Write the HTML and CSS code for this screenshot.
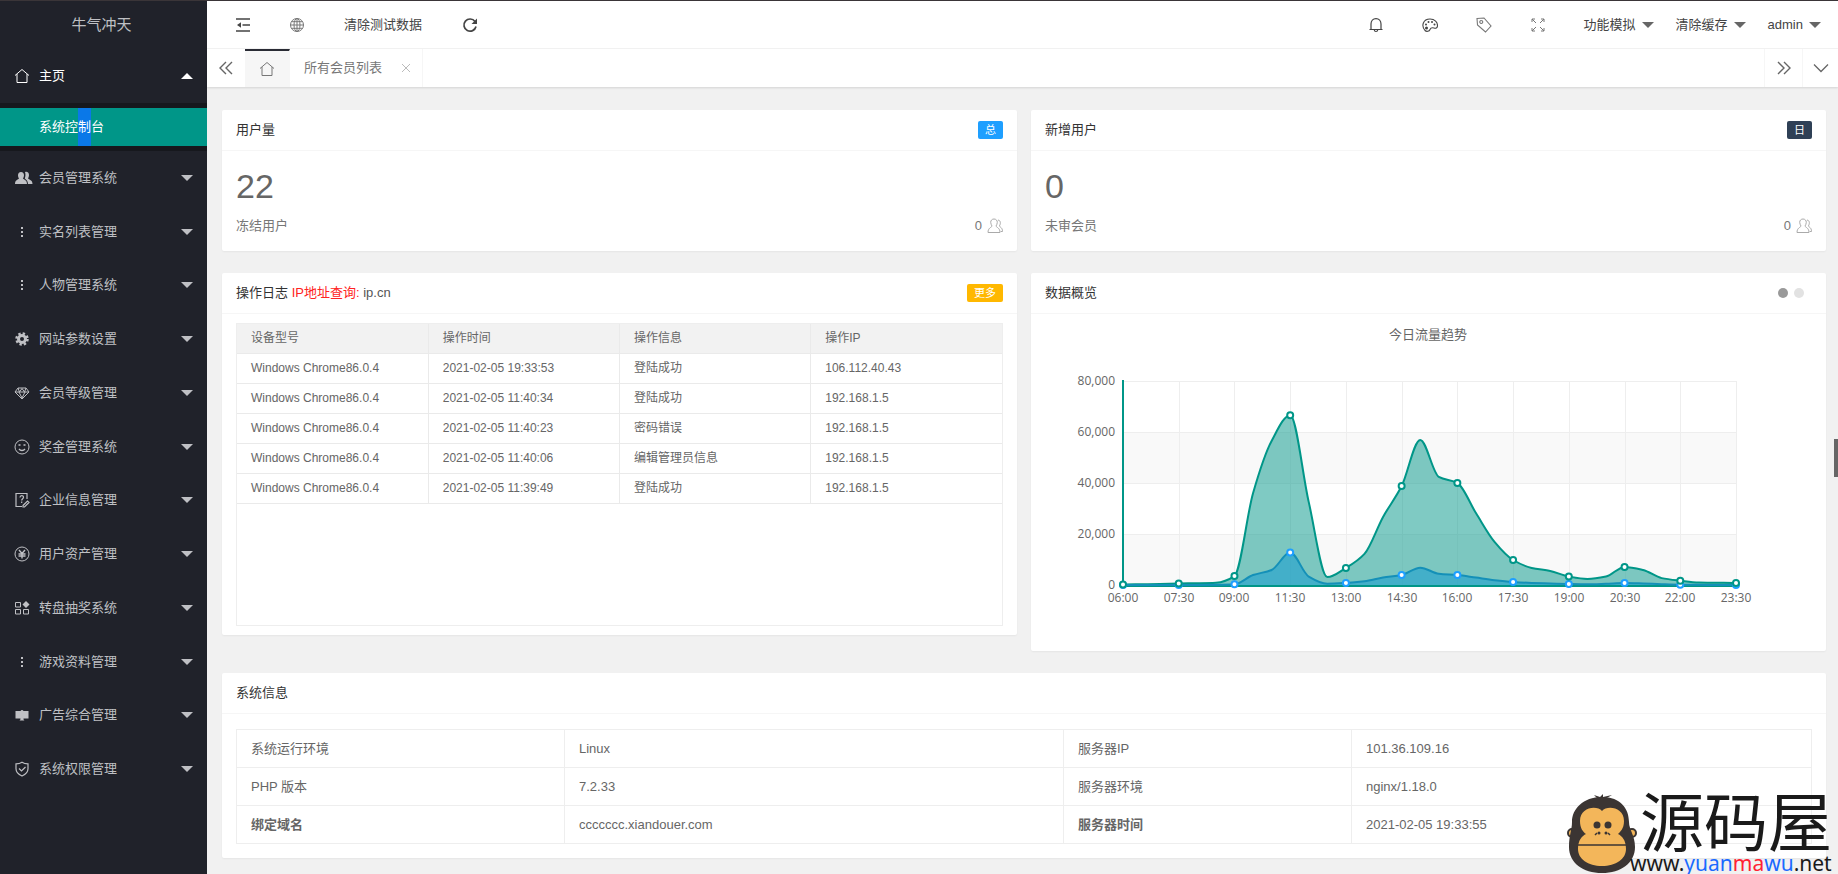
FILE: index.html
```html
<!DOCTYPE html>
<html lang="zh-CN">
<head>
<meta charset="utf-8">
<title>牛气冲天</title>
<link rel="stylesheet" href="styles.css">
</head>
<body>
<svg class="sprite" aria-hidden="true">
  <symbol id="i-home" viewBox="0 0 16 16"><path d="M1 7.500 8 1.500l7 6M3 6v8.500h10V6" fill="none" stroke="currentColor"/></symbol>
  <symbol id="i-users" viewBox="0 0 18 16"><path d="M6 2c2 0 3 1.500 3 3.200 0 1.600-.7 2.500-1 3.300 1 1.200 4 1.500 4 5.500H0c0-4 3-4.300 4-5.500-.4-.8-1-1.700-1-3.300C3 3.500 4 2 6 2zM10 2.300c.7-.8 4-.8 4 2.700 0 1.600-.6 2.600-.9 3.500.9 1.200 4.400 1.500 4.400 5.500H13c0-3-1.800-4.300-3.200-5.500C10.500 6.500 10.800 4 10 2.300z" fill="currentColor"/></symbol>
  <symbol id="i-dots" viewBox="0 0 16 16"><path d="M7 3h2v2H7zM7 7h2v2H7zM7 11h2v2H7z" fill="currentColor"/></symbol>
  <symbol id="i-gear" viewBox="0 0 16 16"><circle cx="8" cy="8" r="3.500" fill="none" stroke="currentColor" stroke-width="3"/><circle cx="8" cy="8" r="5.500" fill="none" stroke="currentColor" stroke-width="2.500" stroke-dasharray="2.300 2.020"/></symbol>
  <symbol id="i-gem" viewBox="0 0 16 16"><path d="M4 3h8l3 4-7 7-7-7zM1.500 7h13M5 7l3 6 3-6M4 3l1.500 4L8 3.500 10.500 7 12 3" fill="none" stroke="currentColor"/></symbol>
  <symbol id="i-smile" viewBox="0 0 16 16"><circle cx="8" cy="8" r="7" fill="none" stroke="currentColor"/><path d="M4.500 6h2M9.500 6h2M5 10c1.500 2 4.500 2 6 0" fill="none" stroke="currentColor" stroke-width="1.300"/></symbol>
  <symbol id="i-form" viewBox="0 0 16 16"><path d="M13 7V1.500H2v13h6M6 5.500c0-2.500 3.500-2.300 3.500-.3C9.500 6.800 7.700 6.600 7.700 8.500M7.700 9.500v1.500M9 13.500l4.500-4.500 1.500 1.500-4.500 4.500H9z" fill="none" stroke="currentColor" stroke-width="1.200"/></symbol>
  <symbol id="i-yen" viewBox="0 0 16 16"><circle cx="8" cy="8" r="7" fill="none" stroke="currentColor"/><path d="M5 4l3 3.500L11 4M8 7.500V12.500M4.500 8h7M4.500 10h7" fill="none" stroke="currentColor" stroke-width="1.400"/></symbol>
  <symbol id="i-apps" viewBox="0 0 16 16"><path d="M1.500 2.500h5v4.500h-5zM1.500 9.500h5V14h-5zM9.500 9.500h5V14h-5z" fill="none" stroke="currentColor"/><path d="M12 1l3.500 3.500L12 8 8.500 4.500z" fill="currentColor"/></symbol>
  <symbol id="i-ad" viewBox="0 0 16 16"><path d="M1.500 4h5c.5-1.200 2.500-1.200 3 0h5v7.500h-5c0 1 .2 1.500 1 2H5.500c.8-.5 1-1 1-2h-5z" fill="currentColor"/></symbol>
  <symbol id="i-shield" viewBox="0 0 16 16"><path d="M8 1.200c2 1.300 4 1.600 6 1.600v5c0 3.500-2.500 5.700-6 7.200-3.500-1.500-6-3.700-6-7.200v-5c2 0 4-.3 6-1.600zM5 7.500l2.500 2.500L11.500 6" fill="none" stroke="currentColor" stroke-width="1.200"/></symbol>
  <symbol id="i-fold" viewBox="0 0 16 16"><path d="M1 2h14M7.500 8H15M1 14h14" fill="none" stroke="currentColor" stroke-width="1.400"/><path d="M2 8l4-2.700v5.400z" fill="currentColor"/></symbol>
  <symbol id="i-globe" viewBox="0 0 16 16"><g fill="none" stroke="currentColor"><circle cx="8" cy="8" r="6.500"/><ellipse cx="8" cy="8" rx="3" ry="6.500"/><path d="M8 1.500v13M1.500 8h13M2.500 4.700h11M2.500 11.300h11"/></g></symbol>
  <symbol id="i-refresh" viewBox="0 0 16 16"><path d="M13 4.500A6.100 6.100 0 1 0 14 9.500" fill="none" stroke="currentColor" stroke-width="1.700"/><path d="M15 1.500V7H9.500z" fill="currentColor"/></symbol>
  <symbol id="i-bell" viewBox="0 0 16 16"><path d="M1.500 12.500h13M3 12.500V7c0-3 2-5.300 5-5.300S13 4 13 7v5.500M6.300 13c.2 2 3.200 2 3.400 0" fill="none" stroke="currentColor" stroke-width="1.200"/></symbol>
  <symbol id="i-palette" viewBox="0 0 16 16"><path d="M3 13.500C-1 9 1 2 8 2c5 0 7.500 3.500 7.500 6.500 0 3-2 3-3.500 2.500-2-.7-3.500.3-4 1.500-.7 2-3.500 2.500-5 1z" fill="none" stroke="currentColor" stroke-width="1.100"/><g fill="currentColor"><circle cx="4.500" cy="11" r="1.500"/><circle cx="4" cy="7.500" r="1"/><circle cx="6.500" cy="5" r="1"/><circle cx="10" cy="5" r="1"/><circle cx="12.500" cy="7.500" r="1"/></g></symbol>
  <symbol id="i-tag" viewBox="0 0 16 16"><path d="M1 1.500 8 1l7 8-5.500 6L1.500 8zM5.200 3.500a1.500 1.500 0 1 0 .1 0" fill="none" stroke="currentColor" stroke-width="1.100"/></symbol>
  <symbol id="i-full" viewBox="0 0 16 16"><path d="M2 5V2h3M2 2l4 4M11 2h3v3M14 2l-4 4M2 11v3h3M2 14l4-4M14 11v3h-3M14 14l-4-4" fill="none" stroke="currentColor"/></symbol>
  <symbol id="i-left" viewBox="0 0 16 16"><path d="M8 2 2 8l6 6M14 2 8 8l6 6" fill="none" stroke="currentColor" stroke-width="1.400"/></symbol>
  <symbol id="i-right" viewBox="0 0 16 16"><path d="M2 2l6 6-6 6M8 2l6 6-6 6" fill="none" stroke="currentColor" stroke-width="1.400"/></symbol>
  <symbol id="i-down" viewBox="0 0 16 16"><path d="M1 4.500l7 7 7-7" fill="none" stroke="currentColor" stroke-width="1.300"/></symbol>
  <symbol id="i-close" viewBox="0 0 16 16"><path d="M4 4l8 8M12 4l-8 8" fill="none" stroke="currentColor"/></symbol>
  <symbol id="i-people" viewBox="0 0 16 16"><path d="M7 1c2 0 3.300 1.400 3.300 3.300 0 1.500-.7 2.600-1.300 3.700.5 1.600 4 1.700 4 6.500H1c0-4.800 3.500-4.900 4-6.500-.6-1.100-1.300-2.200-1.300-3.700C3.700 2.400 5 1 7 1zM11 2c3 .5 2.800 4 1.300 6 .7 1.200 3.200 1.500 3.200 5.500h-1.800" fill="none" stroke="currentColor"/></symbol>
</svg>
<div class="app">
  <aside class="side">
    <div class="brand">牛气冲天</div>
    <div class="home">
      <button class="nav-item nav-open"><svg class="nav-icon"><use href="#i-home"/></svg><span>主页</span><i class="caret caret-up"></i></button>
      <div class="sub"><a class="sub-link" href="#">系统控<span class="picked">制</span>台</a></div>
    </div>
    <nav class="menu">
      <button class="nav-item"><svg class="nav-icon nav-icon-wide"><use href="#i-users"/></svg><span>会员管理系统</span><i class="caret"></i></button>
      <button class="nav-item"><svg class="nav-icon"><use href="#i-dots"/></svg><span>实名列表管理</span><i class="caret"></i></button>
      <button class="nav-item"><svg class="nav-icon"><use href="#i-dots"/></svg><span>人物管理系统</span><i class="caret"></i></button>
      <button class="nav-item"><svg class="nav-icon"><use href="#i-gear"/></svg><span>网站参数设置</span><i class="caret"></i></button>
      <button class="nav-item"><svg class="nav-icon"><use href="#i-gem"/></svg><span>会员等级管理</span><i class="caret"></i></button>
      <button class="nav-item"><svg class="nav-icon"><use href="#i-smile"/></svg><span>奖金管理系统</span><i class="caret"></i></button>
      <button class="nav-item"><svg class="nav-icon"><use href="#i-form"/></svg><span>企业信息管理</span><i class="caret"></i></button>
      <button class="nav-item"><svg class="nav-icon"><use href="#i-yen"/></svg><span>用户资产管理</span><i class="caret"></i></button>
      <button class="nav-item"><svg class="nav-icon"><use href="#i-apps"/></svg><span>转盘抽奖系统</span><i class="caret"></i></button>
      <button class="nav-item"><svg class="nav-icon"><use href="#i-dots"/></svg><span>游戏资料管理</span><i class="caret"></i></button>
      <button class="nav-item"><svg class="nav-icon"><use href="#i-ad"/></svg><span>广告综合管理</span><i class="caret"></i></button>
      <button class="nav-item"><svg class="nav-icon"><use href="#i-shield"/></svg><span>系统权限管理</span><i class="caret"></i></button>
    </nav>
  </aside>

  <div class="main">
    <header class="top">
      <div class="tools">
        <button class="tool" aria-label="折叠菜单"><svg class="icon"><use href="#i-fold"/></svg></button>
        <button class="tool tool-soft" aria-label="网站"><svg class="icon"><use href="#i-globe"/></svg></button>
        <button class="tool tool-text">清除测试数据</button>
        <button class="tool" aria-label="刷新"><svg class="icon"><use href="#i-refresh"/></svg></button>
      </div>
      <div class="tools">
        <button class="tool" aria-label="消息"><svg class="icon"><use href="#i-bell"/></svg></button>
        <button class="tool" aria-label="主题"><svg class="icon"><use href="#i-palette"/></svg></button>
        <button class="tool tool-soft" aria-label="便签"><svg class="icon"><use href="#i-tag"/></svg></button>
        <button class="tool tool-soft" aria-label="全屏"><svg class="icon"><use href="#i-full"/></svg></button>
        <div class="drops">
          <button class="drop">功能模拟<i class="caret"></i></button>
          <button class="drop">清除缓存<i class="caret"></i></button>
          <button class="drop">admin<i class="caret"></i></button>
        </div>
      </div>
    </header>

    <div class="tabs">
      <button class="tab-ctl" aria-label="向左"><svg class="icon"><use href="#i-left"/></svg></button>
      <button class="tab tab-home" aria-label="主页"><svg class="icon"><use href="#i-home"/></svg></button>
      <button class="tab">所有会员列表<svg class="icon close"><use href="#i-close"/></svg></button>
      <button class="tab-ctl tab-next" aria-label="向右"><svg class="icon"><use href="#i-right"/></svg></button>
      <button class="tab-ctl tab-more" aria-label="更多操作"><svg class="icon"><use href="#i-down"/></svg></button>
    </div>

    <main class="content">
      <section class="card">
        <h2 class="card-head">用户量<span class="badge badge-blue">总</span></h2>
        <div class="stat">
          <p class="stat-num">22</p>
          <p class="stat-row"><span>冻结用户</span><span class="stat-side">0<svg class="icon people"><use href="#i-people"/></svg></span></p>
        </div>
      </section>
      <section class="card">
        <h2 class="card-head">新增用户<span class="badge badge-dark">日</span></h2>
        <div class="stat">
          <p class="stat-num">0</p>
          <p class="stat-row"><span>未审会员</span><span class="stat-side">0<svg class="icon people"><use href="#i-people"/></svg></span></p>
        </div>
      </section>

      <section class="card">
        <h2 class="card-head"><span>操作日志 <span class="red">IP地址查询:</span> <a class="plain" href="#">ip.cn</a></span><a class="badge badge-orange" href="#">更多</a></h2>
        <div class="log">
          <table class="log-table">
            <thead><tr><th>设备型号</th><th>操作时间</th><th>操作信息</th><th>操作IP</th></tr></thead>
            <tbody>
              <tr><td>Windows Chrome86.0.4</td><td>2021-02-05 19:33:53</td><td>登陆成功</td><td>106.112.40.43</td></tr>
              <tr><td>Windows Chrome86.0.4</td><td>2021-02-05 11:40:34</td><td>登陆成功</td><td>192.168.1.5</td></tr>
              <tr><td>Windows Chrome86.0.4</td><td>2021-02-05 11:40:23</td><td>密码错误</td><td>192.168.1.5</td></tr>
              <tr><td>Windows Chrome86.0.4</td><td>2021-02-05 11:40:06</td><td>编辑管理员信息</td><td>192.168.1.5</td></tr>
              <tr><td>Windows Chrome86.0.4</td><td>2021-02-05 11:39:49</td><td>登陆成功</td><td>192.168.1.5</td></tr>
            </tbody>
          </table>
        </div>
      </section>
      <section class="card">
        <h2 class="card-head">数据概览<span class="dots"><i class="dot dot-on"></i><i class="dot"></i></span></h2>
        <svg class="chart" id="chart" viewBox="0 0 795 337" role="img" aria-label="今日流量趋势"></svg>
      </section>

      <section class="card card-wide">
        <h2 class="card-head">系统信息</h2>
        <div class="info">
          <table class="info-table">
            <colgroup><col class="c1"><col class="c2"><col class="c3"><col class="c4"></colgroup>
            <tbody>
              <tr><td>系统运行环境</td><td>Linux</td><td>服务器IP</td><td>101.36.109.16</td></tr>
              <tr><td>PHP 版本</td><td>7.2.33</td><td>服务器环境</td><td>nginx/1.18.0</td></tr>
              <tr><th>绑定域名</th><td>ccccccc.xiandouer.com</td><th>服务器时间</th><td>2021-02-05 19:33:55</td></tr>
            </tbody>
          </table>
        </div>
      </section>
    </main>
  </div>
</div>
<div class="thumb"></div>
<div class="mark">
  <svg class="monkey" viewBox="0 0 70 80" aria-hidden="true">
    <path d="M24 5l6-1-3-3 6 2 3-3v3l9-2-7 4z" fill="#3b3533"/>
    <circle cx="5" cy="39" r="4" fill="#f3b65a" stroke="#3b3533" stroke-width="2"/>
    <circle cx="65" cy="39" r="4" fill="#f3b65a" stroke="#3b3533" stroke-width="2"/>
    <path d="M35 3C54 3 62 15 62 28c0 8 6 13 6 25 0 16-14 26-33 26S2 69 2 53c0-12 3-17 3-25C5 15 16 3 35 3z" fill="#3b3533"/>
    <path d="M35 17c5-6 22-4 22 10 0 8-4 11-6 13 4 2 8 6 8 15 0 10-10 17-24 17S11 65 11 55c0-9 4-13 8-15-3-2-6-6-6-13 0-14 17-16 22-10z" fill="#f3b65a"/>
    <g fill="#3b3533"><circle cx="30" cy="31" r="3.500"/><circle cx="41" cy="31" r="3.500"/><circle cx="32" cy="39" r="1.500"/><circle cx="39" cy="39" r="1.500"/></g>
    <path d="M11 51h48M28 41l2-2M43 41l-2-2" stroke="#3b3533" stroke-width="1.500"/>
  </svg>
  <div class="mark-text">
    <div class="mark-name">源码屋</div>
    <div class="mark-url">www.<span class="m-blue">yuan</span><span class="m-red">ma</span><span class="m-blue">wu</span>.net</div>
  </div>
</div>
<script src="chart.js"></script>
</body>
</html>
```
FILE: chart.js
```javascript
(function () {
  var left = 92, right = 705, top = 67, base = 271;
  var hours = ['06:00', '07:30', '09:00', '11:30', '13:00', '14:30', '16:00', '17:30', '19:00', '20:30', '22:00', '23:30'];
  var views = [200, 300, 400, 600, 700, 900, 3500, 36000, 56500, 66600, 32500, 3100, 6700, 12200, 26700, 38800, 56900, 42400, 40000, 28200, 16900, 9800, 6700, 5500, 3300, 2400, 3300, 7100, 5900, 2700, 1700, 1000, 900, 800];
  var visits = [0, 0, 10, 20, 30, 100, 300, 3900, 5900, 12700, 3300, 500, 800, 1500, 2900, 3900, 6800, 4400, 3900, 2900, 1900, 1200, 800, 600, 400, 300, 500, 800, 600, 300, 100, 50, 20, 0];
  var step = (right - left) / (views.length - 1);
  var out = [];

  function points(list) {
    return list.map(function (v, i) { return [left + i * step, base - v / 80000 * (base - top)]; });
  }
  function curve(p) {
    var n = p.length, s = [], m = [], i;
    for (i = 0; i < n - 1; i++) s.push((p[i + 1][1] - p[i][1]) / step);
    for (i = 0; i < n; i++) {
      if (i === 0 || i === n - 1) m.push(0);
      else if (s[i - 1] * s[i] <= 0) m.push(0);
      else m.push(2 * s[i - 1] * s[i] / (s[i - 1] + s[i]));
    }
    var d = 'M' + p[0].join(' ');
    for (i = 0; i < n - 1; i++) {
      d += 'C' + [p[i][0] + step / 3, p[i][1] + m[i] * step / 3,
        p[i + 1][0] - step / 3, p[i + 1][1] - m[i + 1] * step / 3, p[i + 1][0], p[i + 1][1]].join(' ');
    }
    return d;
  }
  function series(list, name) {
    var p = points(list), d = curve(p);
    out.push('<path class="area-' + name + '" d="' + d + 'L' + right + ' ' + base + 'H' + left + 'Z"/>');
    out.push('<path class="line-' + name + '" d="' + d + '"/>');
    return p.filter(function (_, i) { return i % 3 === 0; }).map(function (q) {
      return '<circle class="node-' + name + '" cx="' + q[0] + '" cy="' + q[1] + '" r="3"/>';
    }).join('');
  }

  out.push('<text class="chart-title" x="397" y="25">今日流量趋势</text>');
  [1, 3].forEach(function (i) {
    out.push('<rect class="band" x="' + left + '" y="' + (top + i * 51) + '" width="' + (right - left) + '" height="51"/>');
  });
  ['80,000', '60,000', '40,000', '20,000', '0'].forEach(function (t, i) {
    var y = top + i * 51;
    out.push('<path class="grid" d="M' + left + ' ' + (y + 0.5) + 'H' + right + '"/>');
    out.push('<text class="tick tick-y" x="84" y="' + (y + 4) + '">' + t + '</text>');
  });
  hours.forEach(function (t, i) {
    var x = Math.round(left + i * step * 3);
    out.push('<path class="grid" d="M' + (x + 0.5) + ' ' + top + 'V' + base + '"/>');
    out.push('<text class="tick tick-x" x="' + x + '" y="288">' + t + '</text>');
  });
  out.push('<path class="axis" d="M92 66V272H706"/>');
  var a = series(views, 'green');
  var b = series(visits, 'blue');
  out.push(b, a);
  document.getElementById('chart').innerHTML = out.join('');
})();
```
FILE: styles.css
```css
* { box-sizing: border-box; }
body {
  margin: 0;
  background: #f1f1f1;
  color: #666;
  font: 13px/20px "Liberation Sans", "Noto Sans CJK SC", sans-serif;
}
button {
  border: 0;
  padding: 0;
  background: none;
  color: inherit;
  font: inherit;
  cursor: pointer;
}
a { color: inherit; text-decoration: none; }
h2, p { margin: 0; font-weight: 400; }
.sprite { display: none; }
.icon { width: 16px; height: 16px; flex: none; }

.app {
  display: flex;
  min-height: 100vh;
  border-top: 1px solid #3a3538;
}

/* sidebar */
.side {
  display: flex;
  flex-direction: column;
  flex: none;
  width: 207px;
  background: #20222a;
  color: #bfc0c4;
}
.brand {
  padding: 10px 4px 10px 0;
  font-size: 15px;
  line-height: 28px;
  text-align: center;
}
.menu {
  display: flex;
  flex-direction: column;
  flex: 1;
  padding-bottom: 78px;
}
.nav-item {
  display: flex;
  align-items: center;
  flex: 1;
  width: 100%;
  min-height: 40px;
  padding: 0 14px;
  text-align: left;
}
.nav-open { height: 54px; color: #fff; }
.nav-icon { width: 16px; height: 16px; margin-right: 9px; flex: none; }
.nav-icon-wide { width: 20px; margin-right: 5px; }
.caret {
  width: 12px;
  border: 6px solid transparent;
  border-top-color: currentColor;
  border-bottom: 0;
}
.nav-item .caret { margin-left: auto; }
.caret-up { border-top: 0; border-bottom: 6px solid currentColor; }
.sub { padding: 5px 0; background: #16181d; }
.sub-link {
  display: block;
  padding-left: 39px;
  background: #009688;
  color: #fff;
  line-height: 38px;
}
.picked { display: inline-block; background: #0a78e8; }

/* header */
.main { flex: 1; min-width: 0; }
.top {
  display: flex;
  justify-content: space-between;
  height: 48px;
  padding: 0 17px 4px 9px;
  background: #fff;
  border-bottom: 1px solid #f3f3f3;
  color: #444;
}
.tools { display: flex; align-items: center; }
.tool { display: flex; padding: 4px 19px 0; }
.tool-text { padding: 4px 21px 0 20px; }
.tool-soft { color: #777; }
.drops { display: flex; gap: 22px; padding: 4px 0 0 19px; }
.drop { display: flex; align-items: center; gap: 6px; }
.drop .caret { color: #666; }

.tabs {
  display: flex;
  height: 38px;
  background: #fff;
  box-shadow: 0 1px 2px rgba(0, 0, 0, 0.12);
}
.tab-ctl {
  display: flex;
  align-items: center;
  justify-content: center;
  width: 38px;
  color: #666;
}
.tab {
  display: flex;
  align-items: center;
  gap: 16px;
  padding: 0 8px 0 14px;
  border-right: 1px solid #f6f6f6;
  color: #777;
}
.tab-home { padding: 0 14px; background: #f6f6f6; border-top: 2px solid #292b34; }
.close { color: #bbb; }
.tab-next { margin-left: auto; border-left: 1px solid #f6f6f6; }
.tab-more { border-left: 1px solid #f6f6f6; width: 36px; }

/* cards */
.content {
  display: grid;
  grid-template-columns: 1fr 1fr;
  align-items: start;
  gap: 22px 14px;
  padding: 23px 12px 16px 15px;
}
.card { min-width: 0; background: #fff; border-radius: 2px; box-shadow: 0 1px 2px rgba(0, 0, 0, 0.05); }
.card-wide { grid-column: 1 / -1; }
.card-head {
  display: flex;
  align-items: center;
  justify-content: space-between;
  height: 41px;
  padding: 0 14px;
  border-bottom: 1px solid #f6f6f6;
  color: #333;
  font-size: 13px;
}
.red { color: #f22; }
.plain { color: #555; }
.badge {
  padding: 0 7px;
  border-radius: 2px;
  color: #fff;
  font-size: 11px;
  line-height: 18px;
}
.badge-blue { background: #1e9fff; }
.badge-dark { background: #2f4056; }
.badge-orange { background: #ffb800; }
.stat { padding: 17px 14px 15px; }
.stat-num { font-size: 34px; line-height: 36px; }
.stat-row { display: flex; justify-content: space-between; padding-top: 12px; color: #777; }
.stat-side { display: flex; align-items: center; gap: 5px; }
.people { color: #aaa; }

.log { min-height: 303px; margin: 9px 14px; border: 1px solid #eee; }
.log-table { width: 100%; border-collapse: collapse; table-layout: fixed; font-size: 12px; }
.log-table th, .log-table td {
  height: 30px;
  padding: 0 14px;
  border-right: 1px solid #eaeaea;
  border-bottom: 1px solid #eaeaea;
  font-weight: 400;
  text-align: left;
}
.log-table th { height: 29px; background: #f2f2f2; }
.log-table th:last-child, .log-table td:last-child { border-right: 0; }

.dots { display: flex; gap: 6px; padding-right: 8px; }
.dot { width: 10px; height: 10px; border-radius: 50%; background: #e2e2e2; }
.dot-on { background: #999; }

.info { padding: 15px 14px 14px; }
.info-table { width: 100%; border-collapse: collapse; table-layout: fixed; }
.info-table td, .info-table th {
  height: 38px;
  padding: 0 14px;
  border: 1px solid #eee;
  text-align: left;
}
.c1 { width: 328px; }
.c2 { width: 499px; }
.c3 { width: 288px; }

/* chart */
.chart { display: block; width: 100%; height: auto; }
.chart-title { fill: #666; font-size: 13px; text-anchor: middle; }
.band { fill: #f9f9f9; }
.grid { stroke: #eee; }
.tick { fill: #666; font: 12px "Open Sans", sans-serif; }
.tick-y { text-anchor: end; }
.tick-x { text-anchor: middle; }
.axis { fill: none; stroke: #009688; stroke-width: 2; }
.area-green { fill: #009688; opacity: 0.5; }
.area-blue { fill: #1e9fcf; opacity: 0.6; }
.line-green { fill: none; stroke: #009688; stroke-width: 2; }
.line-blue { fill: none; stroke: #1490b8; stroke-width: 2; }
.node-green { fill: #fff; stroke: #009688; stroke-width: 2; }
.node-blue { fill: #fff; stroke: #1e9fff; stroke-width: 2; }

/* overlays */
.thumb {
  position: absolute;
  top: 439px;
  right: 0;
  width: 4px;
  height: 38px;
  background: #666;
}
.mark {
  position: absolute;
  right: 6px;
  bottom: 0;
  display: flex;
  align-items: flex-end;
  color: #1a1a1a;
}
.monkey { width: 70px; height: 80px; }
.mark-text { margin-left: -7px; }
.mark-name { padding-left: 10px; font-size: 64px; line-height: 56px; }
.mark-url { font: 21px/22px "Noto Sans", sans-serif; }
.m-blue { color: #1a6aff; }
.m-red { color: #ff2233; }
```
